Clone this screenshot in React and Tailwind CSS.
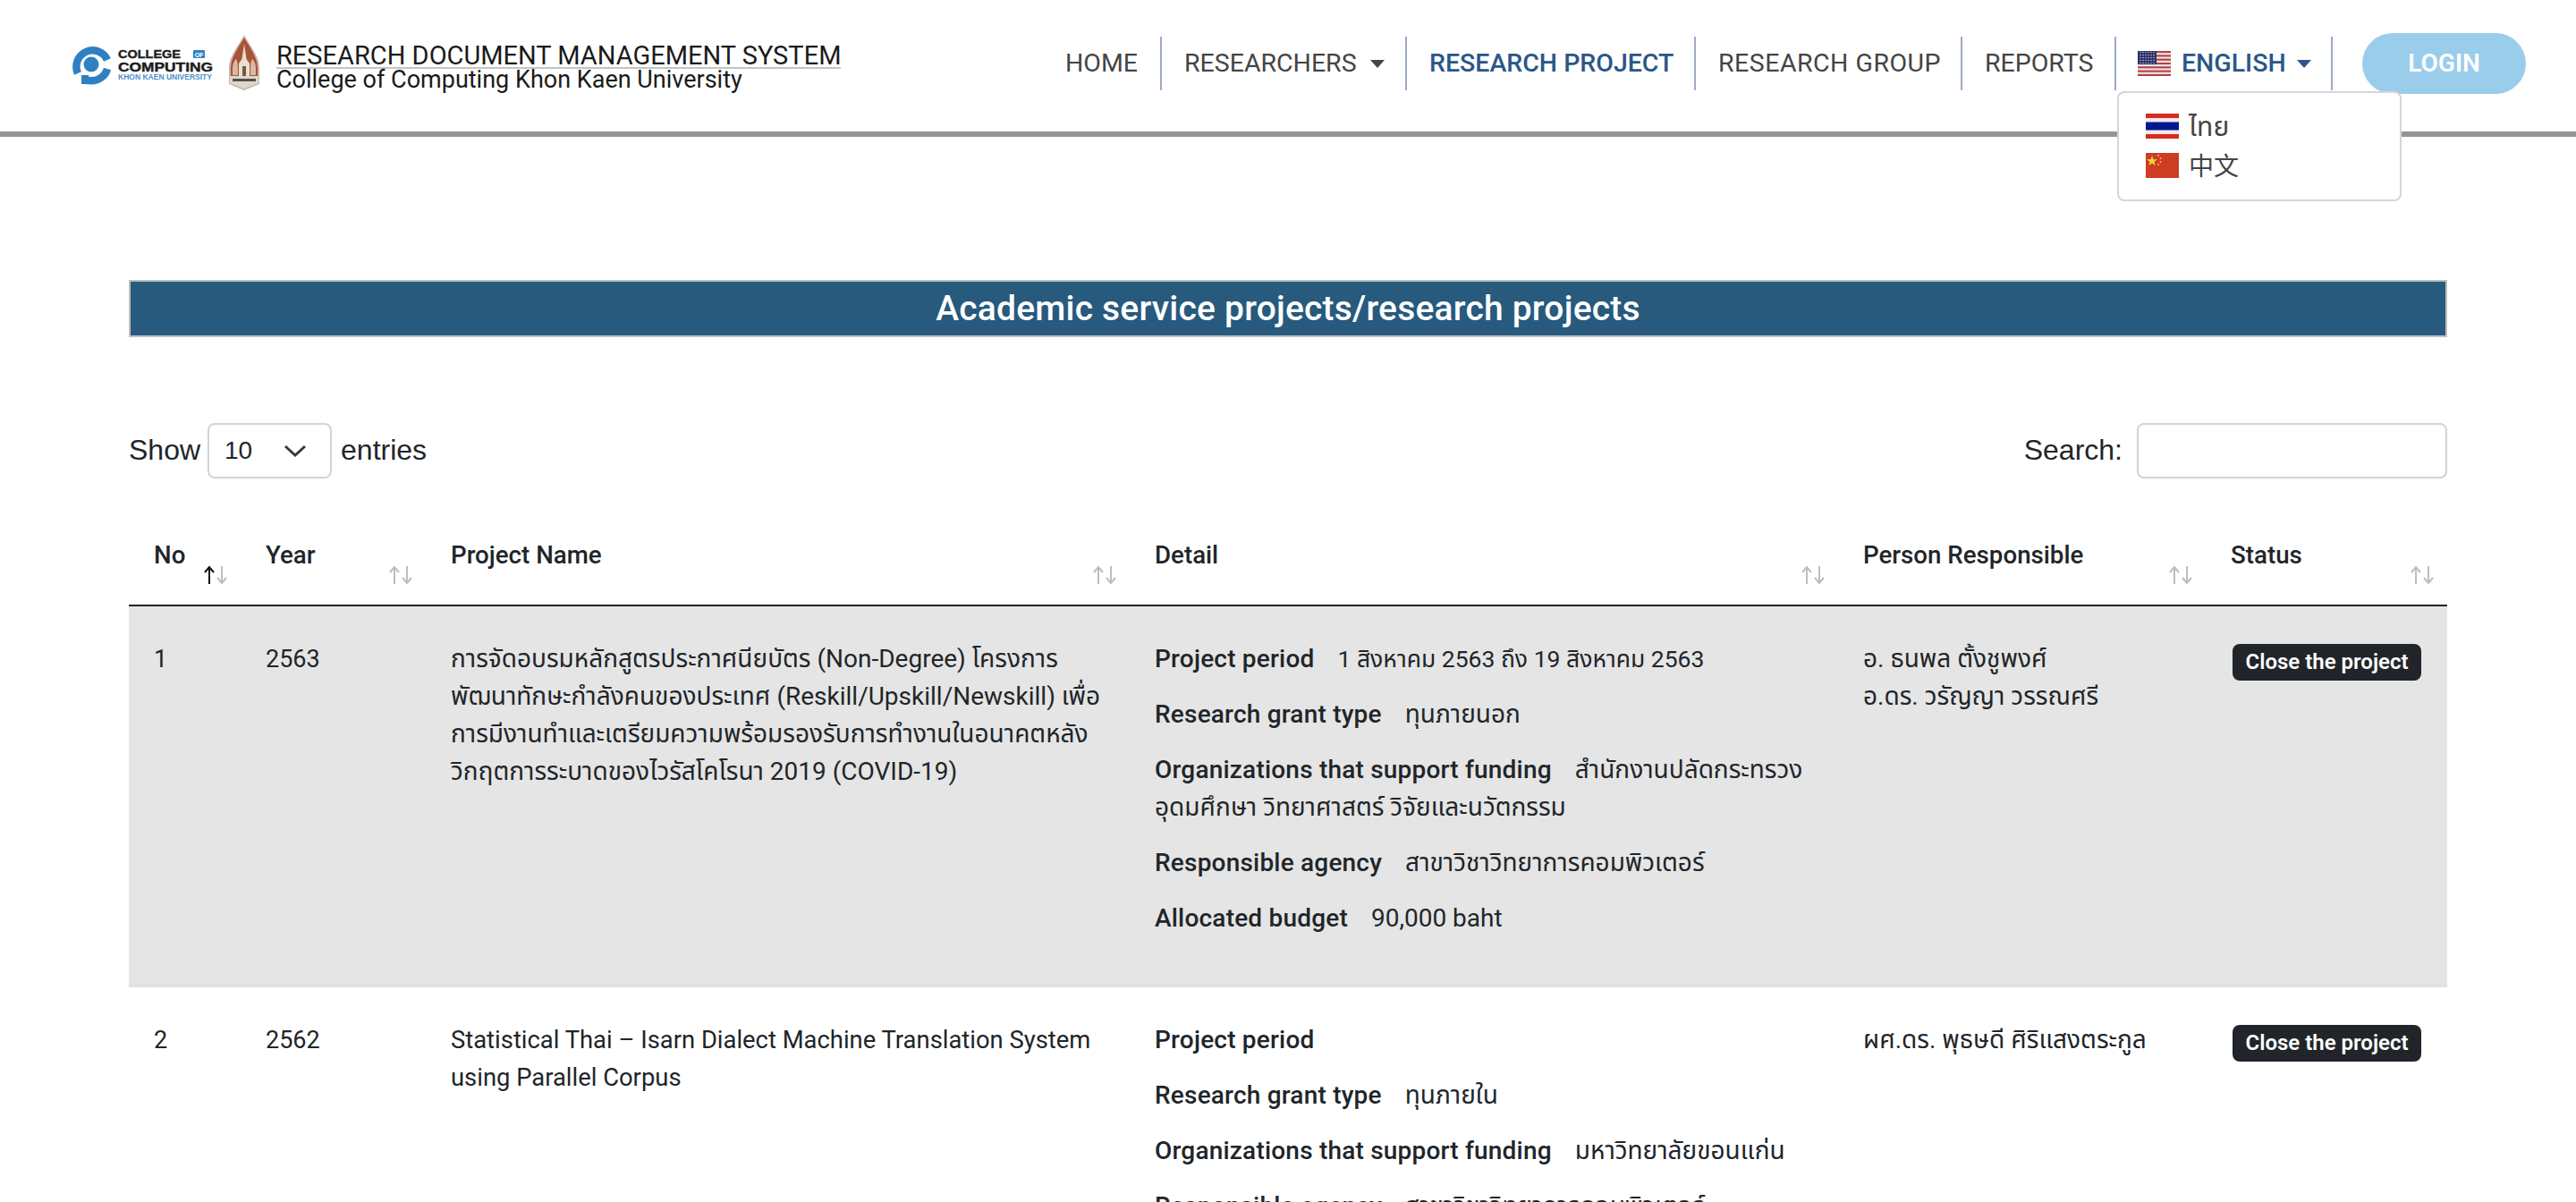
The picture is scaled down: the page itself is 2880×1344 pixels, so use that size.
const bodyFont = "font-['Roboto','Noto_Sans','Noto_Sans_Thai',sans-serif]";

function Logo() {
  return (
    <svg width="172" height="64" viewBox="0 0 172 64" className="shrink-0">
      <g fill="none" stroke="#2f80c3" strokeWidth="8.5">
        {/* upper ring, open on the right */}
        <path d="M50 29 A18 18 0 1 0 17 44" />
        {/* lower ring into the P stem */}
        <path d="M50 39 A18 18 0 0 1 30 52 L26 52" />
      </g>
      <rect x="21" y="46" width="8" height="10" fill="#2f80c3" />
      <circle cx="32" cy="34" r="8.5" fill="#2f80c3" />
      <g fontFamily="Liberation Sans" fontWeight="700" fill="#1c1c1c" stroke="#1c1c1c" strokeWidth="0.4">
        <text x="62" y="26.5" fontSize="13.5" textLength="70" lengthAdjust="spacingAndGlyphs">COLLEGE</text>
        <text x="62" y="41.5" fontSize="14" textLength="106" lengthAdjust="spacingAndGlyphs">COMPUTING</text>
      </g>
      <rect x="146" y="18" width="13" height="9" rx="1" fill="#2f80c3" />
      <text x="152.5" y="25.5" textAnchor="middle" fontFamily="Liberation Sans" fontWeight="700" fontSize="7" fill="#fff">OF</text>
      <text x="62" y="51" fontFamily="Liberation Sans" fontWeight="700" fontSize="8.5" fill="#4b8fcb" textLength="105" lengthAdjust="spacingAndGlyphs">KHON KAEN UNIVERSITY</text>
    </svg>
  );
}

function Crest() {
  return (
    <svg width="38" height="64" viewBox="0 0 38 64" className="shrink-0">
      <path d="M19 1 C23 10 36 24 36 38 L36 56 L19 63 L2 56 L2 38 C2 24 15 10 19 1 Z" fill="#c9b7a4" />
      <path d="M19 4 C23 12 34 25 34 38 L34 48 L4 48 L4 38 C4 25 15 12 19 4 Z" fill="#a9533a" />
      <path d="M19 11 L21.5 28 L25 33 L25 48 L13 48 L13 33 L16.5 28 Z" fill="#eadfcf" />
      <path d="M6 46 L6 38 C6 33 8 30 10 28 C12 31 12 36 12 46 Z M32 46 L32 38 C32 33 30 30 28 28 C26 31 26 36 26 46 Z" fill="#d9b9a4" />
      <path d="M3 47 L35 47 L35 55 L19 61 L3 55 Z" fill="#ddd8cc" />
      <rect x="6" y="50" width="26" height="3" fill="#56514a" />
      <rect x="17" y="36" width="4" height="11" fill="#6b5a4a" />
    </svg>
  );
}

function UsFlag() {
  const stripes = [0, 2, 4, 6, 8, 10, 12];
  return (
    <svg width="37" height="28" viewBox="0 0 37 28" className="shrink-0">
      <rect width="37" height="28" fill="#f1e6e6" />
      {stripes.map((s) => (
        <rect key={s} y={s * 2.154} width="37" height="2.154" fill="#b5434a" />
      ))}
      <rect width="21" height="15" fill="#2b3063" />
      {[2, 5, 8, 11, 14, 17].map((x) =>
        [2, 5, 8, 11, 14].map((y) => <circle key={`${x}-${y}`} cx={x + 1} cy={y - 0.5} r="0.7" fill="#d9dbe8" />)
      )}
    </svg>
  );
}

function ThFlag() {
  return (
    <svg width="37" height="28" viewBox="0 0 37 28" className="shrink-0">
      <rect width="37" height="28" fill="#d82b1f" />
      <rect y="5" width="37" height="18" fill="#f3e9e9" />
      <rect y="9.5" width="37" height="9" fill="#00188f" />
    </svg>
  );
}

function CnFlag() {
  return (
    <svg width="37" height="28" viewBox="0 0 37 28" className="shrink-0">
      <rect width="37" height="28" fill="#cc3d23" />
      <path d="M7 3 L8.5 7.2 L13 7.2 L9.4 9.9 L10.7 14 L7 11.5 L3.3 14 L4.6 9.9 L1 7.2 L5.5 7.2 Z" fill="#f5d23c" />
      <circle cx="14" cy="3" r="0.9" fill="#f5d23c" />
      <circle cx="16.5" cy="6" r="0.9" fill="#f5d23c" />
      <circle cx="16.5" cy="10" r="0.9" fill="#f5d23c" />
      <circle cx="14" cy="13" r="0.9" fill="#f5d23c" />
    </svg>
  );
}

function Caret({ color }) {
  return (
    <svg width="16" height="9" viewBox="0 0 16 9" className="shrink-0">
      <path d="M0 0 L16 0 L8 9 Z" fill={color} />
    </svg>
  );
}

function NavItem({ children, active, caret, className }) {
  return (
    <div className={`flex items-center h-[60px] pl-[25px] border-r-2 border-[#9daac3] ${className}`}>
      <span className={`text-[28.5px] leading-none whitespace-nowrap ${active ? 'text-[#2a5788] font-medium' : 'text-[#444444]'}`}>
        {children}
      </span>
      {caret && <span className="ml-[15px]"><Caret color="#444444" /></span>}
    </div>
  );
}

function SortIcon({ active }) {
  return (
    <svg width="30" height="22" viewBox="0 0 30 22" className="absolute right-[13px] bottom-[22px]">
      <g fill="none" strokeWidth="2" stroke={active ? '#111111' : '#bdbdbd'}>
        <path d="M8 21 L8 2 M3 8 L8 2 L13 8" />
      </g>
      <g fill="none" strokeWidth="2" stroke="#bdbdbd">
        <path d="M22 1 L22 20 M17 14 L22 20 L27 14" />
      </g>
    </svg>
  );
}

function Th({ children, active }) {
  return (
    <th className="relative px-[28px] pt-[17px] pb-[35px] text-left align-top text-[27.7px] leading-[40px] font-medium text-[#212529]">
      {children}
      <SortIcon active={active} />
    </th>
  );
}

function DetailLine({ label, children, valueClass }) {
  return (
    <p className="mb-[20px]">
      <span className="font-medium mr-[26px] tracking-[0.2px]">{label}</span>
      <span className={valueClass}>{children}</span>
    </p>
  );
}

const rows = [
  {
    no: 1,
    year: 2563,
    name: [
      'การจัดอบรมหลักสูตรประกาศนียบัตร (Non-Degree) โครงการ',
      'พัฒนาทักษะกำลังคนของประเทศ (Reskill/Upskill/Newskill) เพื่อ',
      'การมีงานทำและเตรียมความพร้อมรองรับการทำงานในอนาคตหลัง',
      'วิกฤตการระบาดของไวรัสโคโรนา 2019 (COVID-19)',
    ],
    nameClass: '',
    period: '1 สิงหาคม 2563 ถึง 19 สิงหาคม 2563',
    grant: 'ทุนภายนอก',
    org: 'สำนักงานปลัดกระทรวง อุดมศึกษา วิทยาศาสตร์ วิจัยและนวัตกรรม',
    agency: 'สาขาวิชาวิทยาการคอมพิวเตอร์',
    budget: '90,000 baht',
    people: ['อ. ธนพล ตั้งชูพงศ์', 'อ.ดร. วรัญญา วรรณศรี'],
  },
  {
    no: 2,
    year: 2562,
    name: ['Statistical Thai – Isarn Dialect Machine Translation System', 'using Parallel Corpus'],
    nameClass: 'text-[27.4px]',
    period: '',
    grant: 'ทุนภายใน',
    org: 'มหาวิทยาลัยขอนแก่น',
    agency: 'สาขาวิชาวิทยาการคอมพิวเตอร์',
    budget: '',
    people: ['ผศ.ดร. พุธษดี ศิริแสงตระกูล'],
  },
];

export default function App() {
  return (
    <div className={`h-screen overflow-hidden bg-white text-[#212529] ${bodyFont}`}>
      {/* Navbar */}
      <header className="h-[153px] border-b-[6px] border-[#959595] pl-[70px] pr-[56px] flex items-start justify-between">
        <div className="flex items-start pt-[38px]">
          <Logo />
          <span className="ml-[12px]"><Crest /></span>
          <div className="ml-[17px] mt-[11px] text-[#1a1a1a]">
            <div className="text-[29px] leading-[26px] border-b-2 border-[#c4c4c4] whitespace-nowrap">RESEARCH DOCUMENT MANAGEMENT SYSTEM</div>
            <div className="text-[27px] leading-[24px] whitespace-nowrap">College of Computing Khon Kaen University</div>
          </div>
        </div>
        <nav className="flex items-start pt-[41px]">
          <NavItem className="w-[133px]">HOME</NavItem>
          <NavItem className="w-[274px]" caret>RESEARCHERS</NavItem>
          <NavItem className="w-[323px]" active>RESEARCH PROJECT</NavItem>
          <NavItem className="w-[298px] tracking-[0.5px]">RESEARCH GROUP</NavItem>
          <NavItem className="w-[172px]">REPORTS</NavItem>
          <div className="relative flex items-center w-[242px] h-[60px] pl-[24px] border-r-2 border-[#9daac3]">
            <UsFlag />
            <span className="ml-[12px] text-[28.5px] leading-none font-medium text-[#2a5788]">ENGLISH</span>
            <span className="ml-[12px]"><Caret color="#2a5788" /></span>
            <div className="absolute left-[1px] top-[61px] z-10 w-[318px] h-[123px] bg-white border-2 border-[#d6d6d6] rounded-[8px] pl-[30px] pt-[15px] text-[#444444]">
              <div className="flex items-center h-[44px] gap-[11px] text-[30px]"><ThFlag />ไทย</div>
              <div className="flex items-center h-[44px] gap-[11px] text-[28px]"><CnFlag /><span className="font-['Noto_Sans_CJK_SC',sans-serif] -mt-[2px]">中文</span></div>
            </div>
          </div>
          <button className="ml-[33px] -mt-[4px] w-[183px] h-[68px] rounded-full bg-[#9acdec] text-white text-[28px] font-semibold">LOGIN</button>
        </nav>
      </header>

      <main className="px-[144px] pt-[160px]">
        <h2 className="h-[64px] flex items-center justify-center bg-[#275a7d] border-2 border-[#c0c0c0] text-white text-[39px] tracking-[0.2px] font-medium">
          Academic service projects/research projects
        </h2>

        {/* Table controls */}
        <div className="mt-[96px] h-[62px] flex items-center justify-between font-['Liberation_Sans',sans-serif] text-[32px]">
          <div className="flex items-center">
            <span className="pb-[2px]">Show</span>
            <div className="ml-[8px] mr-[10px] w-[139px] h-[62px] border-2 border-[#ced4da] rounded-[8px] flex items-center justify-between pl-[17px] pr-[26px] text-[28px]">
              10
              <svg width="26" height="14" viewBox="0 0 26 14" fill="none" stroke="#343a40" strokeWidth="3">
                <path d="M2 2 L13 12 L24 2" />
              </svg>
            </div>
            <span className="pb-[2px]">entries</span>
          </div>
          <div className="flex items-center">
            <span className="pb-[2px]">Search:</span>
            <input className="ml-[16px] w-[347px] h-[62px] border-2 border-[#ced4da] rounded-[8px] bg-white" />
          </div>
        </div>

        {/* Table */}
        <table className="mt-[49px] w-full table-fixed border-collapse text-[28px] leading-[42px]">
          <colgroup>
            <col className="w-[125px]" />
            <col className="w-[207px]" />
            <col className="w-[787px]" />
            <col className="w-[792px]" />
            <col className="w-[411px]" />
            <col className="w-[270px]" />
          </colgroup>
          <thead>
            <tr className="border-b-2 border-[#212529]">
              <Th active>No</Th>
              <Th>Year</Th>
              <Th>Project Name</Th>
              <Th>Detail</Th>
              <Th>Person Responsible</Th>
              <Th>Status</Th>
            </tr>
          </thead>
          <tbody>
            {rows.map((row, i) => (
              <tr key={row.no} className={`border-b-[4px] border-[#dee2e6] ${i % 2 === 0 ? 'bg-[#e5e5e5]' : 'bg-white'}`}>
                <td className="align-top px-[28px] pt-[38px] pb-[32px] text-[27px]">{row.no}</td>
                <td className="align-top px-[28px] pt-[38px] pb-[32px] text-[27px]">{row.year}</td>
                <td className={`align-top px-[28px] pt-[38px] pb-[32px] ${row.nameClass}`}>
                  {row.name.map((line) => <div key={line} className="whitespace-nowrap">{line}</div>)}
                </td>
                <td className="align-top px-[28px] pt-[38px] pb-[32px]">
                  <DetailLine label="Project period" valueClass="text-[26.5px]">{row.period}</DetailLine>
                  <DetailLine label="Research grant type">{row.grant}</DetailLine>
                  <DetailLine label="Organizations that support funding">{row.org}</DetailLine>
                  <DetailLine label="Responsible agency">{row.agency}</DetailLine>
                  <DetailLine label="Allocated budget">{row.budget}</DetailLine>
                </td>
                <td className="align-top px-[28px] pt-[38px] pb-[32px]">
                  {row.people.map((p) => <div key={p}>{p}</div>)}
                </td>
                <td className="align-top pl-[30px] pt-[40px] pb-[32px]">
                  <span className="inline-block w-[211px] h-[41px] rounded-[8px] bg-[#212529] text-white text-[24px] leading-[41px] font-semibold text-center whitespace-nowrap">Close the project</span>
                </td>
              </tr>
            ))}
          </tbody>
        </table>
      </main>
    </div>
  );
}
